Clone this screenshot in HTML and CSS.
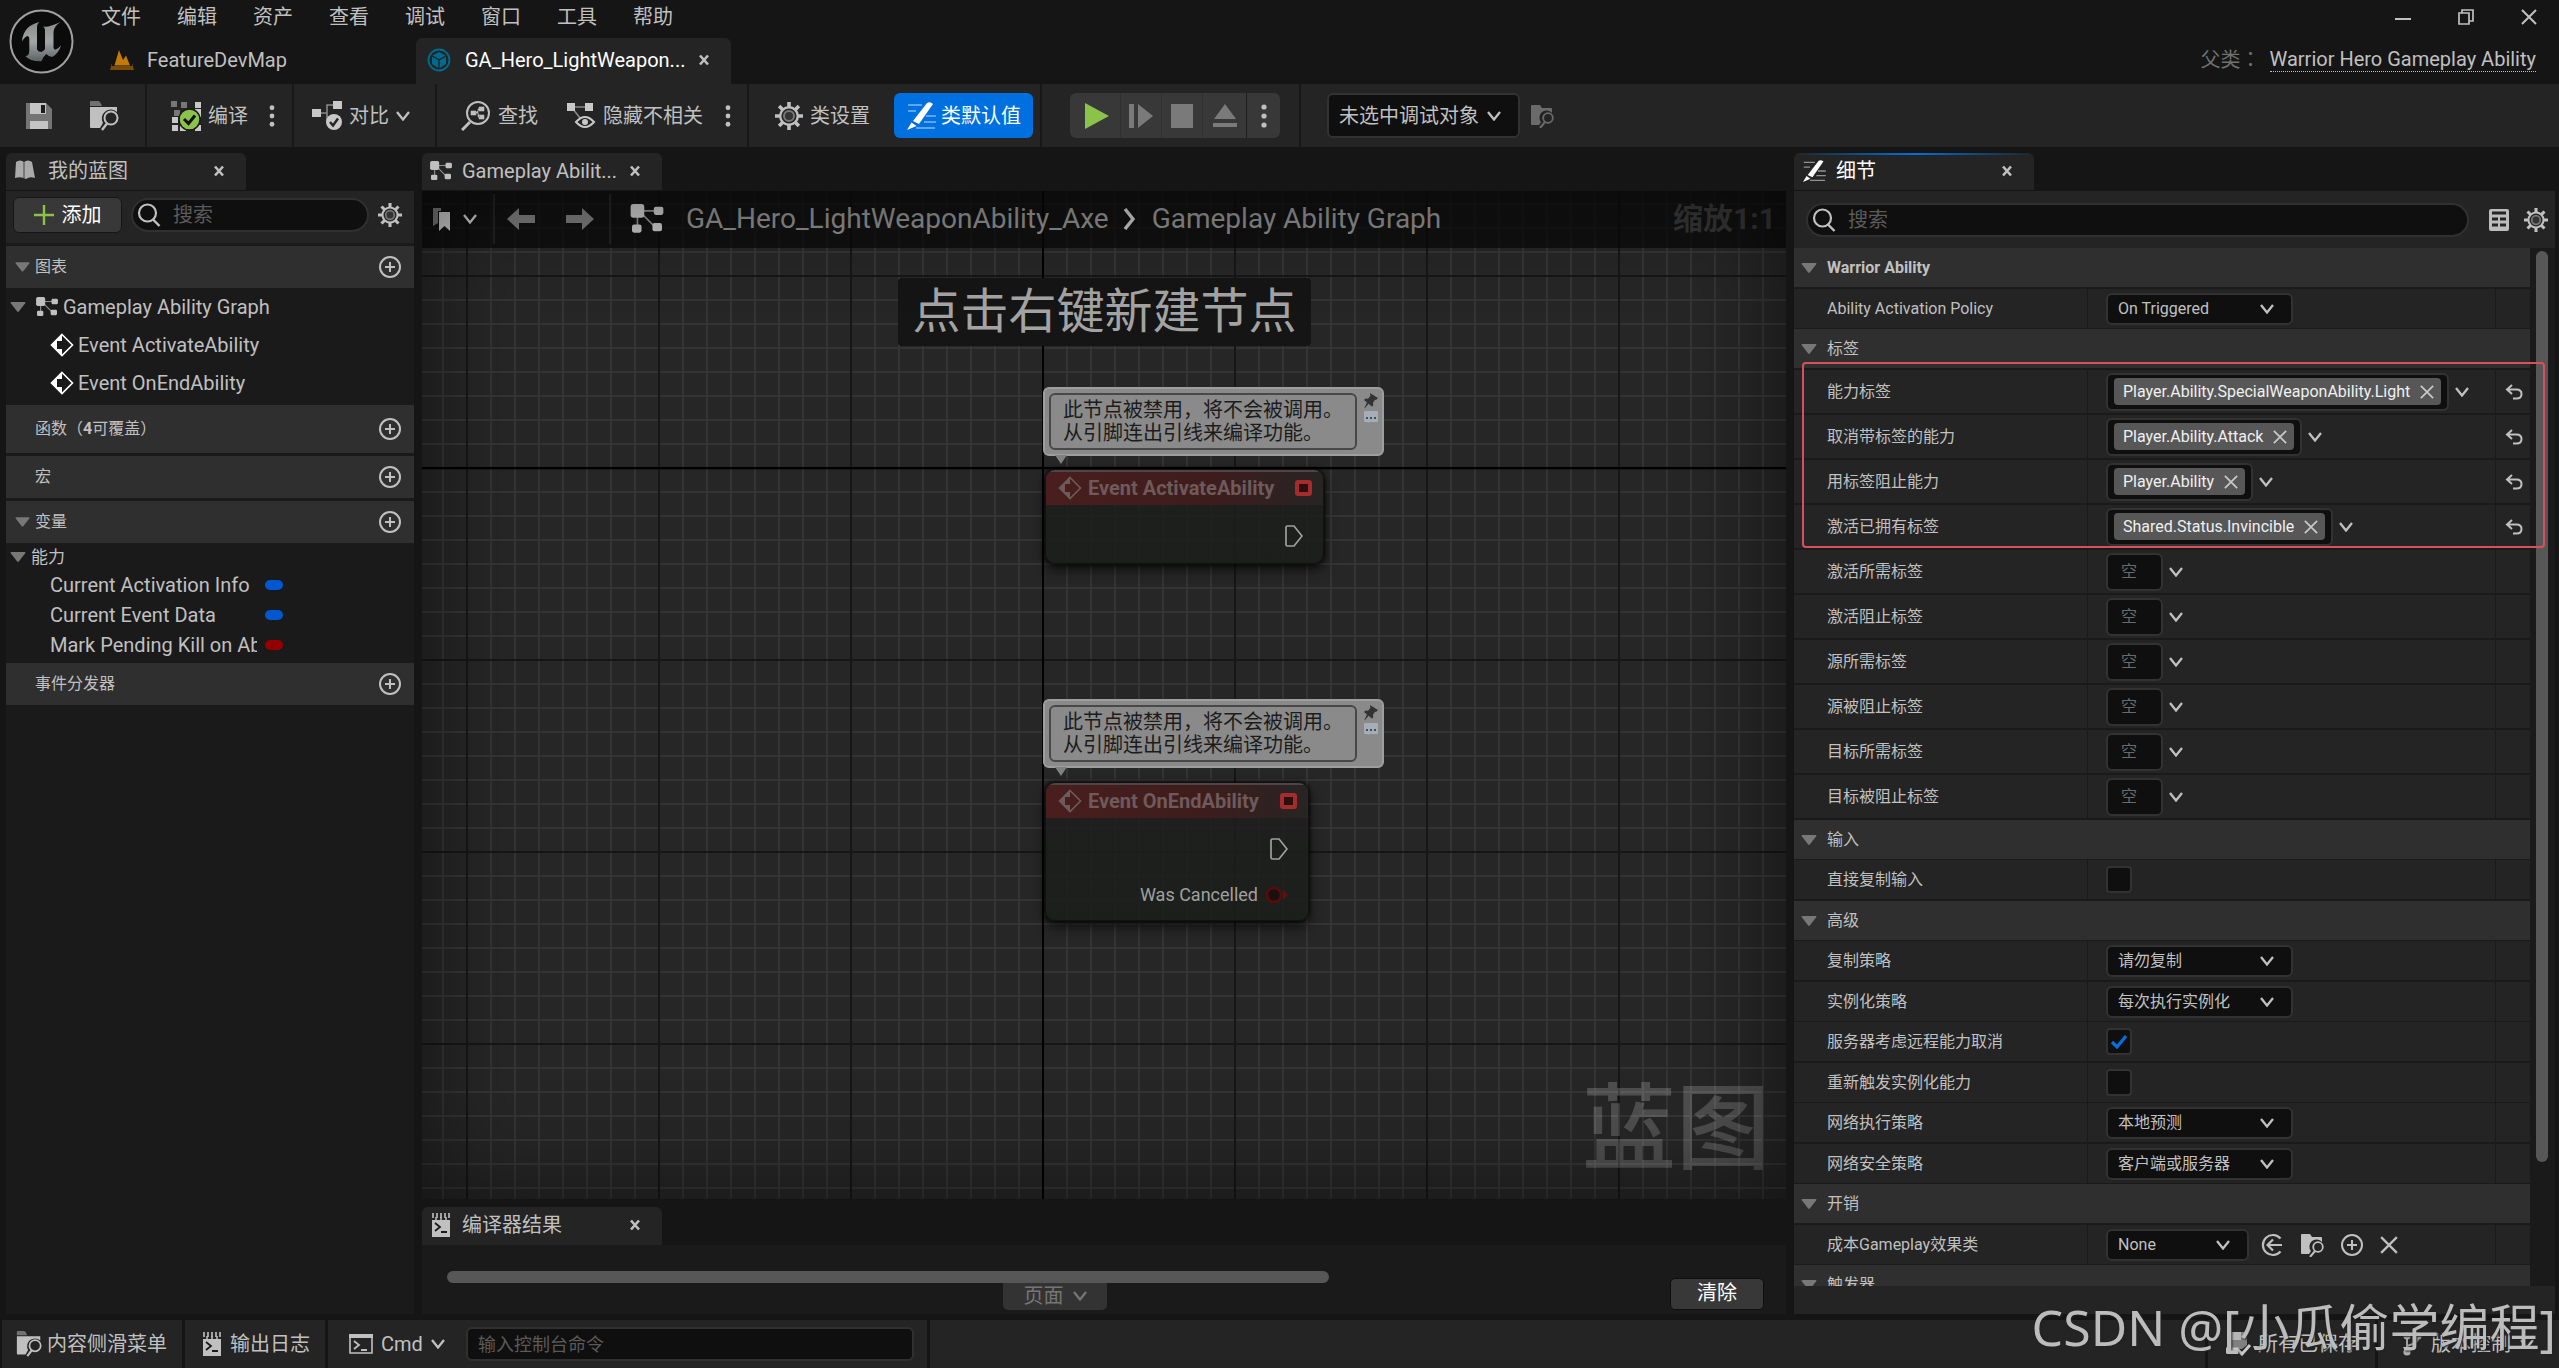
FILE: index.html
```html
<!DOCTYPE html>
<html lang="zh-CN">
<head>
<meta charset="utf-8">
<title>GA_Hero_LightWeaponAbility_Axe</title>
<link rel="stylesheet" href="styles.css">
</head>
<body>
<svg class="sprite" aria-hidden="true">
  <symbol id="chev" viewBox="0 0 14 10"><path d="M1 1 7 8.500 13 1" fill="none" stroke="currentColor" stroke-width="2.300"/></symbol>
  <symbol id="tri" viewBox="0 0 16 10"><path d="M1.500 0h13q1.500 0 .7 1.300L9 9.300q-1 1.200-2 0L.8 1.300Q0 0 1.500 0z" fill="currentColor"/></symbol>
  <symbol id="close" viewBox="0 0 12 12"><path d="M2 1.500 10 10.500M10 1.500 2 10.500" fill="none" stroke="currentColor" stroke-width="2.600"/></symbol>
  <symbol id="cross" viewBox="0 0 16 16"><path d="M1 1 15 15M15 1 1 15" fill="none" stroke="currentColor" stroke-width="2"/></symbol>
  <symbol id="dots" viewBox="0 0 6 24"><g fill="currentColor"><circle cx="3" cy="3" r="2.600"/><circle cx="3" cy="12" r="2.600"/><circle cx="3" cy="21" r="2.600"/></g></symbol>
  <symbol id="plus" viewBox="0 0 24 24"><circle cx="12" cy="12" r="10" fill="none" stroke="currentColor" stroke-width="2"/><path d="M12 7v10M7 12h10" stroke="currentColor" stroke-width="2"/></symbol>
  <symbol id="search" viewBox="0 0 24 24"><circle cx="10.500" cy="10" r="8.500" fill="none" stroke="currentColor" stroke-width="2.200"/><path d="M16 16.500 22.500 23" stroke="currentColor" stroke-width="2.400"/></symbol>
  <symbol id="gear" viewBox="0 0 28 28"><g stroke="currentColor" stroke-width="3.600"><path d="M14 0v28M0 14h28M4.100 4.100l19.800 19.800M23.900 4.100 4.100 23.900"/></g><circle cx="14" cy="14" r="10" fill="currentColor"/><circle cx="14" cy="14" r="7.600" fill="#242424"/><circle cx="14" cy="14" r="5" fill="#333" stroke="#777" stroke-width="2"/></symbol>
  <symbol id="graph" viewBox="0 0 24 22"><path d="M5 5h16M5 5v13M7 6l12 12" stroke="currentColor" stroke-width="1.200" opacity=".7"/><g fill="currentColor"><rect x="0" y="0" width="10" height="10" rx="2"/><rect x="17" y="2" width="7" height="6" rx="1.500"/><rect x="1" y="15" width="7" height="6" rx="1.500"/><rect x="16" y="14" width="7" height="6" rx="1.500"/></g></symbol>
  <symbol id="event" viewBox="0 0 24 24"><path d="M12 1.500 22.500 12 12 22.500 1.500 12z" fill="none" stroke="currentColor" stroke-width="1.600"/><path d="M12 1.500 1.500 12 12 22.500V16H7V8h5z" fill="currentColor"/></symbol>
  <symbol id="browse" viewBox="0 0 30 30"><path d="M1 5V1q0-1 1-1h7q2 0 4 5z" fill="currentColor" opacity=".5"/><path d="M1 6h27v5a9 9 0 0 0-14 11l-3 5H2q-1 0-1-1z" fill="currentColor"/><circle cx="22" cy="17" r="6.500" fill="none" stroke="currentColor" stroke-width="2"/><path d="M18 22.500 13 29" stroke="currentColor" stroke-width="2.400"/></symbol>
  <symbol id="folderfind" viewBox="0 0 24 24"><path d="M1 2q0-1 1-1h8l2 3h9q1 0 1 1v4a7 7 0 0 0-11 9l-2 3H2q-1 0-1-1z" fill="currentColor"/><circle cx="18" cy="14" r="4.800" fill="none" stroke="currentColor" stroke-width="1.800"/><path d="M15 18 10 24" stroke="currentColor" stroke-width="2"/></symbol>
  <symbol id="pencil" viewBox="0 0 30 28"><path d="M2 3h14M2 9h8M20 14h10M18 20h12M10 26h19" stroke="currentColor" stroke-width="1.600" opacity=".5"/><path d="M21 1q3-2 6 1L13 22l-6-3z" fill="currentColor"/><path d="M5.500 20.500 10.500 24 1 28z" fill="currentColor"/></symbol>
  <symbol id="log" viewBox="0 0 18 24"><path d="M0 4h18v20H0z" fill="currentColor"/><path d="M1.500 0v7M6.500 0v7M11.500 0v7M16.500 0v7" stroke="#242424" stroke-width="3.500"/><path d="M1 0v5M5 0v5M9 0v5M13 0v5M17 0v5" stroke="currentColor" stroke-width="1.600"/><path d="M3 10l5 4-5 4M9 19h6" fill="none" stroke="#1a1a1a" stroke-width="1.800"/></symbol>
  <symbol id="reset" viewBox="0 0 18 16"><path d="M7 1 2 5.500 7 10M2 5.500h9.500q5 0 5 4.500t-5 4.500H8" fill="none" stroke="currentColor" stroke-width="2"/></symbol>
  <symbol id="pin" viewBox="0 0 14 15"><path d="M6 0 14 5l-2 2-1-.2-2 3 .3 2.700-1.300 1-3.500-2.700L1 15l-.5-.5L3 9.500 0 7l1.500-1.500 2.500.2L6.300 3z" fill="currentColor"/></symbol>
  <symbol id="bubble" viewBox="0 0 14 12"><path d="M0 1q0-1 1-1h12q1 0 1 1v9q0 1-1 1H6l-2 1-.5-1H1q-1 0-1-1z" fill="#a6adb5"/><path d="M2 7h2M6 7h2M10 7h2" stroke="#3f5062" stroke-width="2"/></symbol>
  <symbol id="exec" viewBox="0 0 18 22"><path d="M1 2.500q0-1.500 1.500-1.500H9l8 10-8 10H2.500Q1 21 1 19.500z" fill="none" stroke="currentColor" stroke-width="1.700"/></symbol>
</svg>

<header class="top">
  <svg class="logo" viewBox="0 0 66 66"><defs><linearGradient id="lg" x1="0" y1="0" x2="0" y2="1"><stop offset="0" stop-color="#8c8c8c"/><stop offset=".5" stop-color="#a2a5a6"/><stop offset="1" stop-color="#5c6265"/></linearGradient></defs><circle cx="33.500" cy="33.500" r="31" fill="#0b0b0b" stroke="#a0a0a0" stroke-width="2"/><path d="M14 33.500Q15 18 31.500 14q-2.500 1.500-2.500 5v22.500q1.500 2.500 4.300 2.500 2.500-1 3.700-3V22q0-2.500-2-3.500 3.500 1 8.500-1 4-1.500 9.200-3.500-6.500 3.500-7.200 10v15.500q.3 2 1.800 2.300 2.500-.5 5.700-4.300-2.500 8-8.700 11.500-4-.5-6-3-3 2.500-5 7.300-11 .5-16-5.300 4 0 4-5.500V30.500q0-2.500-2-2.500-3 1-5.300 5.500z" fill="url(#lg)"/></svg>
  <div class="topcol">
    <div class="menurow">
      <nav class="menus"><a href="#">文件</a><a href="#">编辑</a><a href="#">资产</a><a href="#">查看</a><a href="#">调试</a><a href="#">窗口</a><a href="#">工具</a><a href="#">帮助</a></nav>
      <div class="winctl">
        <button aria-label="最小化"><svg width="16" height="16" viewBox="0 0 16 16"><path d="M0 10h16" stroke="currentColor" stroke-width="2"/></svg></button>
        <button aria-label="还原"><svg width="16" height="16" viewBox="0 0 16 16"><path d="M1 4h10v11H1zM4 4V1h11v11h-4" fill="none" stroke="currentColor" stroke-width="1.700"/></svg></button>
        <button aria-label="关闭"><svg width="16" height="16"><use href="#cross"/></svg></button>
      </div>
    </div>
    <div class="tabrow">
      <div class="maptab"><svg width="24" height="20" viewBox="0 0 24 20"><path d="M4.500 15.500 9 0l4 10 3-4.500 4 10z" fill="#c47a0a"/><path d="M2 13v3h20v-3l2 7H0z" fill="#7a4b07"/></svg><span>FeatureDevMap</span></div>
      <div class="assettab"><svg width="24" height="24" viewBox="0 0 24 24"><circle cx="12" cy="12" r="10.500" fill="none" stroke="#006b91" stroke-width="1.800"/><path d="M12 4l6.500 3.500L12 11 5.500 7.500zM5 8.800l6.300 3.400V20L5 16zM19 8.800l-6.300 3.400V20L19 16z" fill="#006b91"/></svg><span>GA_Hero_LightWeapon...</span><button aria-label="关闭标签"><svg width="12" height="12"><use href="#close"/></svg></button></div>
      <div class="parent"><span>父类<em lang="zh-TW">：</em></span><a href="#">Warrior Hero Gameplay Ability</a></div>
    </div>
  </div>
</header>

<div class="toolbar">
  <div class="grp g1">
    <button aria-label="保存"><svg width="28" height="28" viewBox="0 0 28 28"><path d="M1 1h20l6 6v20H1z" fill="#747474"/><path d="M5 1h16v11H5zM5 19h18v8H5z" fill="#c4c4c4"/><path d="M16 3h4v8h-4z" fill="#1c1c1c"/></svg></button>
    <button aria-label="浏览"><svg width="30" height="30"><use href="#browse"/></svg></button>
  </div>
  <div class="grp g2">
    <button><svg width="30" height="30" viewBox="0 0 30 30"><path d="M0 0h6v6H0zM10 1h6v6h-6zM3 9h6v6H3z" fill="#777"/><path d="M24 1h6v6h-6zM24 8h6v8h-6zM1 16h6v6H1zM1 24h6v6H1zM9 24h6v6H9zM24 24h6v6h-6z" fill="#c8c8c8"/><circle cx="18.500" cy="18.500" r="10.500" fill="#8bc24a" stroke="#1a1a1a" stroke-width="1.500"/><path d="M13 18l4.500 4.500 6.500-8" fill="none" stroke="#111" stroke-width="3"/></svg>编译</button>
    <button aria-label="更多"><svg width="6" height="22"><use href="#dots"/></svg></button>
  </div>
  <div class="grp g3">
    <button><svg width="30" height="30" viewBox="0 0 30 30"><path d="M8 12h7V4h6M15 12v8" fill="none" stroke="#888" stroke-width="1.600"/><path d="M0 8h9v8H0zM21 0h9v8h-9z" fill="#c8c8c8"/><circle cx="22" cy="21" r="8" fill="#c8c8c8"/><path d="M18 21l3 3.500 5-7" fill="none" stroke="#242424" stroke-width="2.400"/></svg>对比<svg width="14" height="10"><use href="#chev"/></svg></button>
  </div>
  <div class="grp g4">
    <button><svg width="30" height="30" viewBox="0 0 30 30"><circle cx="17" cy="12" r="11" fill="none" stroke="currentColor" stroke-width="2"/><path d="M9 21 1 29" stroke="currentColor" stroke-width="3"/><path d="M10 10h5v4h-5zM18 6h5v4h-5zM18 14h5v4h-5zM14 12h3V8h2M17 12v4h2" fill="currentColor" stroke="currentColor" stroke-width=".6"/></svg>查找</button>
    <button><svg width="30" height="30" viewBox="0 0 30 30"><path d="M5 6h18M7 8l7 9" stroke="#888" stroke-width="1.600"/><path d="M1 2h8v8H1zM19 2h8v8h-8z" fill="#c8c8c8"/><path d="M10 21q9-10 18 0-9 10-18 0z" fill="none" stroke="#c8c8c8" stroke-width="2"/><circle cx="19" cy="21" r="3" fill="#c8c8c8"/></svg>隐藏不相关</button>
    <button aria-label="更多"><svg width="6" height="22"><use href="#dots"/></svg></button>
  </div>
  <div class="grp g5">
    <button><svg width="28" height="28"><use href="#gear"/></svg>类设置</button>
    <button class="blue"><svg width="30" height="28"><use href="#pencil"/></svg>类默认值</button>
  </div>
  <div class="grp g6">
    <div class="play">
      <button aria-label="播放"><svg width="24" height="26" viewBox="0 0 24 26"><path d="M0 0 24 13 0 26z" fill="#8bc24a"/></svg></button>
      <button aria-label="步进"><svg width="24" height="26" viewBox="0 0 24 26"><path d="M0 1h5v24H0zM9 1l15 12L9 25z" fill="#7a7a7a"/></svg></button>
      <button aria-label="停止"><svg width="24" height="26" viewBox="0 0 24 26"><path d="M1 1h22v24H1z" fill="#7a7a7a"/></svg></button>
      <button aria-label="弹出"><svg width="24" height="26" viewBox="0 0 24 26"><path d="M12 1 23 16H1zM0 20h24v4H0z" fill="#7a7a7a"/></svg></button>
      <button aria-label="更多"><svg width="6" height="26"><use href="#dots"/></svg></button>
    </div>
  </div>
  <div class="grp g7">
    <div class="sel dbg"><select aria-label="调试对象"><option>未选中调试对象</option></select><svg width="14" height="10"><use href="#chev"/></svg></div>
    <button class="dim" aria-label="浏览对象"><svg width="24" height="24"><use href="#folderfind"/></svg></button>
  </div>
</div>

<main>
  <section class="left">
    <div class="tab"><svg width="22" height="22" viewBox="0 0 22 22"><path d="M2 2q4-3 8 0 4-3 8 0l3 16q-5-2-9 1-5-3-11-1z" fill="#aaa"/><path d="M10 2v16" stroke="#666" stroke-width="1.500"/></svg><span>我的蓝图</span><button aria-label="关闭"><svg width="12" height="12"><use href="#close"/></svg></button></div>
    <div class="lefttools">
      <button class="add"><svg width="20" height="20" viewBox="0 0 20 20"><path d="M10 0v20M0 10h20" stroke="#8bc24a" stroke-width="2.400"/></svg>添加</button>
      <label class="search"><svg width="24" height="24"><use href="#search"/></svg><input type="text" placeholder="搜索" aria-label="搜索蓝图"></label>
      <button aria-label="设置"><svg width="24" height="24"><use href="#gear"/></svg></button>
    </div>
    <div class="tree">
      <div class="sec"><svg class="tri" width="16" height="10"><use href="#tri"/></svg><span>图表</span><button aria-label="添加图表"><svg width="24" height="24"><use href="#plus"/></svg></button></div>
      <div class="graphs">
        <div class="g"><svg class="tri" width="16" height="10"><use href="#tri"/></svg><svg class="gi" width="22" height="20"><use href="#graph"/></svg>Gameplay Ability Graph</div>
        <div class="e"><svg width="24" height="24"><use href="#event"/></svg>Event ActivateAbility</div>
        <div class="e"><svg width="24" height="24"><use href="#event"/></svg>Event OnEndAbility</div>
      </div>
      <div class="sec tall gapb"><span>函数（<b>4</b>可覆盖）</span><button aria-label="添加函数"><svg width="24" height="24"><use href="#plus"/></svg></button></div>
      <div class="sec gapb"><span>宏</span><button aria-label="添加宏"><svg width="24" height="24"><use href="#plus"/></svg></button></div>
      <div class="sec"><svg class="tri" width="16" height="10"><use href="#tri"/></svg><span>变量</span><button aria-label="添加变量"><svg width="24" height="24"><use href="#plus"/></svg></button></div>
      <div class="vars">
        <div class="cat"><svg class="tri" width="16" height="10"><use href="#tri"/></svg>能力</div>
        <div class="v"><span>Current Activation Info</span><i class="pill"></i></div>
        <div class="v"><span>Current Event Data</span><i class="pill"></i></div>
        <div class="v"><span>Mark Pending Kill on Ability Failure</span><i class="pill red"></i></div>
      </div>
      <div class="sec"><span>事件分发器</span><button aria-label="添加事件分发器"><svg width="24" height="24"><use href="#plus"/></svg></button></div>
    </div>
  </section>

  <section class="mid">
    <div class="tab gtab"><svg width="22" height="20"><use href="#graph"/></svg><span>Gameplay Abilit...</span><button aria-label="关闭"><svg width="12" height="12"><use href="#close"/></svg></button></div>
    <div class="canvas">
      <div class="crumbs">
        <button class="bm" aria-label="书签"><svg width="18" height="24" viewBox="0 0 18 24"><path d="M0 1h8v3H5v12l-5 3z" fill="#777"/><path d="M6 5h11v19l-5.500-5L6 24z" fill="#c8c8c8"/></svg><svg width="14" height="10"><use href="#chev"/></svg></button>
        <div class="nav"><button aria-label="后退"><svg width="28" height="22" viewBox="0 0 28 22"><path d="M0 11 12 0v7h16v8H12v7z" fill="#777"/></svg></button><button aria-label="前进"><svg width="28" height="22" viewBox="0 0 28 22"><path d="M28 11 16 0v7H0v8h16v7z" fill="#777"/></svg></button></div>
        <svg class="gi" width="34" height="30"><use href="#graph"/></svg>
        <a href="#">GA_Hero_LightWeaponAbility_Axe</a>
        <svg class="sepc" width="14" height="22" viewBox="0 0 14 22"><path d="M2 1l8 10-8 10" fill="none" stroke="#c0c0c0" stroke-width="3.400"/></svg>
        <span>Gameplay Ability Graph</span>
        <b>缩放1:1</b>
      </div>
      <div class="hint">点击右键新建节点</div>
      <div class="note n1"><p>此节点被禁用，将不会被调用。<br>从引脚连出引线来编译功能。</p><div><svg class="pin" width="14" height="15"><use href="#pin"/></svg><svg width="14" height="12"><use href="#bubble"/></svg></div></div>
      <div class="node k1">
        <h3><svg width="24" height="24"><use href="#event"/></svg>Event ActivateAbility<i></i></h3>
        <div class="out"><svg width="18" height="22"><use href="#exec"/></svg></div>
      </div>
      <div class="note n2"><p>此节点被禁用，将不会被调用。<br>从引脚连出引线来编译功能。</p><div><svg class="pin" width="14" height="15"><use href="#pin"/></svg><svg width="14" height="12"><use href="#bubble"/></svg></div></div>
      <div class="node k2">
        <h3><svg width="24" height="24"><use href="#event"/></svg>Event OnEndAbility<i></i></h3>
        <div class="out"><svg width="18" height="22"><use href="#exec"/></svg></div>
        <div class="out was">Was Cancelled<svg width="24" height="18" viewBox="0 0 24 18"><circle cx="9" cy="9" r="7" fill="#1a1010" stroke="#5a0c0c" stroke-width="2.600"/><path d="M18 4l5 5-5 5z" fill="#6a0c0c"/></svg></div>
      </div>
      <div class="bpmark">蓝图</div>
    </div>
    <div class="tab ctab"><svg width="18" height="24"><use href="#log"/></svg><span>编译器结果</span><button aria-label="关闭"><svg width="12" height="12"><use href="#close"/></svg></button></div>
    <div class="results">
      <div class="hbar"></div>
      <div class="resrow"><button class="page">页面<svg width="14" height="10"><use href="#chev"/></svg></button><button class="clear">清除</button></div>
    </div>
  </section>

  <section class="right">
    <div class="tab dtab"><svg width="24" height="22"><use href="#pencil"/></svg><span>细节</span><button aria-label="关闭"><svg width="12" height="12"><use href="#close"/></svg></button></div>
    <div class="dtools">
      <label class="search"><svg width="24" height="24"><use href="#search"/></svg><input type="text" placeholder="搜索" aria-label="搜索细节"></label>
      <button aria-label="属性矩阵"><svg width="20" height="22" viewBox="0 0 20 22"><rect width="20" height="22" rx="2" fill="#bdbdbd"/><path d="M3 4h14M3 10h6M11 10h6M3 16h6M11 16h6" stroke="#242424" stroke-width="3"/></svg></button>
      <button aria-label="设置"><svg width="24" height="24"><use href="#gear"/></svg></button>
    </div>
    <div class="dbody">
      <div class="list">
        <div class="hd thick"><svg class="tri" width="16" height="10"><use href="#tri"/></svg><b>Warrior Ability</b></div>
        <div class="row"><label for="p0">Ability Activation Policy</label><div class="val"><div class="sel"><select id="p0"><option>On Triggered</option></select><svg width="14" height="10"><use href="#chev"/></svg></div></div><div></div></div>
        <div class="hd thick"><svg class="tri" width="16" height="10"><use href="#tri"/></svg>标签</div>
        <div class="row tag"><span>能力标签</span><div class="val"><div class="box"><span>Player.Ability.SpecialWeaponAbility.Light<button aria-label="移除"><svg width="14" height="14"><use href="#cross"/></svg></button></span></div><svg width="14" height="10"><use href="#chev"/></svg></div><div><svg width="18" height="16"><use href="#reset"/></svg></div></div>
        <div class="row tag"><span>取消带标签的能力</span><div class="val"><div class="box"><span>Player.Ability.Attack<button aria-label="移除"><svg width="14" height="14"><use href="#cross"/></svg></button></span></div><svg width="14" height="10"><use href="#chev"/></svg></div><div><svg width="18" height="16"><use href="#reset"/></svg></div></div>
        <div class="row tag"><span>用标签阻止能力</span><div class="val"><div class="box"><span>Player.Ability<button aria-label="移除"><svg width="14" height="14"><use href="#cross"/></svg></button></span></div><svg width="14" height="10"><use href="#chev"/></svg></div><div><svg width="18" height="16"><use href="#reset"/></svg></div></div>
        <div class="row tag"><span>激活已拥有标签</span><div class="val"><div class="box"><span>Shared.Status.Invincible<button aria-label="移除"><svg width="14" height="14"><use href="#cross"/></svg></button></span></div><svg width="14" height="10"><use href="#chev"/></svg></div><div><svg width="18" height="16"><use href="#reset"/></svg></div></div>
        <div class="row tag"><span>激活所需标签</span><div class="val"><div class="box empty">空</div><svg width="14" height="10"><use href="#chev"/></svg></div><div></div></div>
        <div class="row tag"><span>激活阻止标签</span><div class="val"><div class="box empty">空</div><svg width="14" height="10"><use href="#chev"/></svg></div><div></div></div>
        <div class="row tag"><span>源所需标签</span><div class="val"><div class="box empty">空</div><svg width="14" height="10"><use href="#chev"/></svg></div><div></div></div>
        <div class="row tag"><span>源被阻止标签</span><div class="val"><div class="box empty">空</div><svg width="14" height="10"><use href="#chev"/></svg></div><div></div></div>
        <div class="row tag"><span>目标所需标签</span><div class="val"><div class="box empty">空</div><svg width="14" height="10"><use href="#chev"/></svg></div><div></div></div>
        <div class="row tag"><span>目标被阻止标签</span><div class="val"><div class="box empty">空</div><svg width="14" height="10"><use href="#chev"/></svg></div><div></div></div>
        <div class="hd"><svg class="tri" width="16" height="10"><use href="#tri"/></svg>输入</div>
        <div class="row thick"><label for="c0">直接复制输入</label><div class="val"><input type="checkbox" id="c0"></div><div></div></div>
        <div class="hd"><svg class="tri" width="16" height="10"><use href="#tri"/></svg>高级</div>
        <div class="row thick"><label for="p1">复制策略</label><div class="val"><div class="sel"><select id="p1"><option>请勿复制</option></select><svg width="14" height="10"><use href="#chev"/></svg></div></div><div></div></div>
        <div class="row"><label for="p2">实例化策略</label><div class="val"><div class="sel"><select id="p2"><option>每次执行实例化</option></select><svg width="14" height="10"><use href="#chev"/></svg></div></div><div></div></div>
        <div class="row thick"><label for="c1">服务器考虑远程能力取消</label><div class="val"><span class="ck"><input type="checkbox" id="c1" checked><svg width="18" height="14" viewBox="0 0 18 14"><path d="M2 7l5 5 9-11" fill="none" stroke="#0070e0" stroke-width="3.200"/></svg></span></div><div></div></div>
        <div class="row"><label for="c2">重新触发实例化能力</label><div class="val"><input type="checkbox" id="c2"></div><div></div></div>
        <div class="row thick"><label for="p3">网络执行策略</label><div class="val"><div class="sel"><select id="p3"><option>本地预测</option></select><svg width="14" height="10"><use href="#chev"/></svg></div></div><div></div></div>
        <div class="row"><label for="p4">网络安全策略</label><div class="val"><div class="sel"><select id="p4"><option>客户端或服务器</option></select><svg width="14" height="10"><use href="#chev"/></svg></div></div><div></div></div>
        <div class="hd thick"><svg class="tri" width="16" height="10"><use href="#tri"/></svg>开销</div>
        <div class="row"><label for="p5">成本Gameplay效果类</label><div class="val cost"><div class="sel none"><select id="p5"><option>None</option></select><svg width="14" height="10"><use href="#chev"/></svg></div>
          <button aria-label="使用选中项"><svg width="24" height="24" viewBox="0 0 24 24"><path d="M20.500 5.500a10 10 0 1 0 0 13M22 12H8M13 6.500 7.500 12l5.500 5.500" fill="none" stroke="currentColor" stroke-width="2.200"/></svg></button>
          <button aria-label="浏览"><svg width="24" height="24"><use href="#folderfind"/></svg></button>
          <button aria-label="新建"><svg width="24" height="24"><use href="#plus"/></svg></button>
          <button aria-label="清空"><svg width="18" height="18"><use href="#cross"/></svg></button></div><div></div></div>
        <div class="hd"><svg class="tri" width="16" height="10"><use href="#tri"/></svg>触发器</div>
      </div>
      <div class="vbar"><i></i></div>
      <div class="mark"></div>
    </div>
    <div class="dfoot"></div>
  </section>
</main>

<footer>
  <button class="f1"><svg width="26" height="28"><use href="#browse"/></svg>内容侧滑菜单</button>
  <button class="f2"><svg width="18" height="24"><use href="#log"/></svg>输出日志</button>
  <div class="f3"><button><svg width="24" height="20" viewBox="0 0 24 20"><path d="M1 1h22v18H1z" fill="none" stroke="currentColor" stroke-width="1.600"/><path d="M0 0h24v4H0z" fill="currentColor"/><path d="M5 7l5 4-5 4M12 16h6" fill="none" stroke="currentColor" stroke-width="1.800"/></svg>Cmd<svg width="14" height="10"><use href="#chev"/></svg></button><input type="text" placeholder="输入控制台命令" aria-label="控制台命令"></div>
  <div class="f4"></div>
  <button class="f5"><svg width="26" height="24" viewBox="0 0 26 24"><path d="M1 0h17l3 3v10l-5 4H1z" fill="#808080"/><path d="M5 0h10v8H5z" fill="#b5b5b5"/><path d="M1 17h10v3H1zM12 18l4 4 8-9" fill="none" stroke="#c8c8c8" stroke-width="3"/></svg>所有已保存</button>
  <button class="f6"><svg width="20" height="24" viewBox="0 0 20 24"><path d="M5 4v17M16 4v3q0 4-11 7" fill="none" stroke="#a0a0a0" stroke-width="2"/><g fill="#b0b0b0"><circle cx="5" cy="4" r="3.600"/><circle cx="16" cy="4" r="3.600"/><circle cx="5" cy="20" r="3.600"/></g></svg>版本控制<svg width="14" height="10"><use href="#chev"/></svg></button>
</footer>
<div class="credit">CSDN @[小瓜偷学编程]</div>
</body>
</html>
```
FILE: styles.css
```css
* { box-sizing: border-box; }
html, body { margin: 0; height: 100%; }
body {
  display: flex; flex-direction: column; height: 100vh; overflow: hidden; position: relative;
  background: #151515; color: #c0c0c0;
  font: 20px/24px Roboto, "Noto Sans CJK SC", sans-serif;
}
.sprite { position: absolute; width: 0; height: 0; }
svg { display: block; flex: none; }
em { font-style: normal; font-family: "Noto Sans CJK TC", sans-serif; line-height: 1; }
button, input, select { font: inherit; color: inherit; border: 0; background: none; padding: 0; margin: 0; }
button { display: flex; align-items: center; white-space: nowrap; flex: none; }
a { color: inherit; text-decoration: none; }
input::placeholder { color: #5a5a5a; opacity: 1; }

/* title area */
.top { display: flex; flex: none; height: 84px; }
.logo { width: 66px; height: 66px; margin: 8px 0 0 8px; }
.topcol { flex: 1; display: flex; flex-direction: column; }
.menurow { height: 34px; display: flex; justify-content: space-between; align-items: center; padding: 0 22px 0 27px; }
.menus { display: flex; gap: 36px; }
.winctl { display: flex; gap: 47px; }
.tabrow { display: flex; margin-top: 4px; height: 46px; align-items: center; }
.maptab { width: 342px; display: flex; align-items: center; gap: 13px; padding-left: 36px; }
.assettab { width: 315px; height: 46px; display: flex; align-items: center; padding: 0 21px 0 11px; background: #242424; border-radius: 6px 6px 0 0; color: #fff; }
.assettab span { margin-left: 14px; flex: 1; }
.assettab button, .tab button { color: #c0c0c0; }
.tabrow > div { padding-bottom: 2px; }
.parent { margin-left: auto; padding-right: 23px; display: flex; }
.parent span { color: #707070; width: 69px; }
.parent a { border-bottom: 1px dotted #c0c0c0; line-height: 22px; }

/* toolbar */
.toolbar { flex: none; height: 63px; background: #242424; display: flex; }
.grp { display: flex; align-items: center; border-right: 2px solid #181818; }
.g1 { width: 147px; padding-left: 25px; gap: 36px; }
.g2 { width: 147px; padding-left: 24px; gap: 21px; }
.g3 { width: 143px; padding-left: 18px; }
.g4 { width: 312px; padding-left: 24px; gap: 28px; }
.g4 button:last-child { margin-left: -6px; }
.g5 { width: 293px; padding-left: 26px; gap: 24px; }
.g6 { width: 259px; padding-left: 28px; }
.g7 { flex: 1; border: 0; padding-left: 26px; gap: 10px; }
.grp button { gap: 7px; }
.grp .blue { background: #0070e0; color: #fff; height: 45px; border-radius: 6px; padding: 0 12px; gap: 5px; }
.play { display: flex; height: 45px; background: #383838; border-radius: 6px; }
.play button { width: 41px; justify-content: center; border-right: 1px solid #303030; }
.play button:nth-child(4) { width: 44px; border-color: #1e1e1e; }
.play button:first-child { width: 51px; padding-left: 3px; }
.play button:last-child { width: 33px; border: 0; }
.dim { color: #6a6a6a; }

.sel { position: relative; width: 187px; height: 32px; }
.sel select { width: 100%; height: 100%; appearance: none; background: #0f0f0f; border: 2px solid #323232; border-radius: 6px; padding: 0 10px; }
.sel svg { position: absolute; right: 19px; top: 50%; margin-top: -5px; pointer-events: none; }
.sel.dbg { width: 193px; height: 45px; }

/* panels */
main { flex: 1; min-height: 0; display: flex; gap: 8px; padding: 6px 4px 6px 6px; }
section { display: flex; flex-direction: column; min-height: 0; }
.tab { flex: none; width: 240px; height: 37px; margin-bottom: 1px; padding: 0 21px 2px 8px; display: flex; align-items: center; background: #242424; border-radius: 6px 6px 0 0; }
.tab span { flex: 1; margin-left: 12px; }
.tab.gtab span { margin-left: 10px; }

.left { width: 408px; flex: none; }
.lefttools { height: 52px; flex: none; background: #242424; display: flex; align-items: center; gap: 9px; padding: 0 12px 4px 7px; }
.add { width: 109px; height: 36px; justify-content: center; gap: 8px; background: #383838; border: 1px solid #161616; border-radius: 6px; color: #fff; }
.search { flex: 1; min-width: 0; height: 34px; display: flex; align-items: center; gap: 12px; padding: 0 4px; background: #0f0f0f; border: 2px solid #303030; border-radius: 17px; }
.search input { flex: 1; min-width: 0; }
.tree { flex: 1; background: #1a1a1a; border-top: 3px solid #1a1a1a; }
.sec { height: 42px; background: #2f2f2f; display: flex; align-items: center; padding: 0 12px 0 29px; font-size: 16px; }
.sec span { flex: 1; }
.sec .tri { margin: 0 5px 0 -20px; width: 15px; }
.tri { color: #787878; }
.tall { height: 48px; }
.gapb { margin-bottom: 3px; }
.graphs { height: 117px; }
.graphs div { display: flex; align-items: center; height: 38px; }
.graphs .g { padding-left: 4px; }
.g .gi { margin: 0 5px 0 10px; }
.graphs .e { padding-left: 44px; gap: 4px; }
.e svg { color: #fff; }
.vars { height: 120px; }
.cat { height: 27px; display: flex; align-items: center; gap: 5px; padding-left: 4px; font-size: 17px; }
.v { height: 30px; display: flex; align-items: center; padding-left: 44px; }
.v span { width: 207px; margin-right: 8px; overflow: hidden; white-space: nowrap; }
.pill { width: 18px; height: 10px; border-radius: 5px; background: #0058d0; }
.pill.red { background: #940000; }

/* graph */
.mid { flex: 1; min-width: 0; }
.canvas {
  flex: 1; position: relative; overflow: hidden; background-color: #262626;
  background-image:
    linear-gradient(90deg, #000 2px, transparent 2px), linear-gradient(#000 2px, transparent 2px),
    linear-gradient(90deg, #161616 2px, transparent 2px), linear-gradient(#161616 2px, transparent 2px),
    linear-gradient(90deg, #343434 2px, transparent 2px), linear-gradient(#343434 2px, transparent 2px);
  background-size: 4000px 100%, 100% 4000px, 192px 100%, 100% 192px, 24px 100%, 100% 24px;
  background-position: 620px 0, 0 276px, 620px 0, 0 276px, 620px 0, 0 276px;
}
.canvas::after { content: ""; position: absolute; inset: 0; box-shadow: inset 0 0 100px rgba(0,0,0,.5); pointer-events: none; }
.crumbs { height: 57px; display: flex; align-items: center; padding: 0 10px 2px 11px; background: rgba(8,8,8,.72); font-size: 28px; line-height: 32px; color: #8a8a8a; }
.bm { gap: 12px; width: 60px; color: #c8c8c8; }
.nav { display: flex; gap: 31px; width: 118px; padding-left: 12px; border: solid #222; border-width: 0 2px; height: 50px; }
.crumbs .gi { margin: 0 22px 0 19px; color: #c0c0c0; }
.sepc { margin: 0 15px 0 14px; }
.crumbs b { margin-left: auto; font-size: 30px; color: #353535; }
.hint { position: absolute; left: 476px; top: 87px; width: 413px; height: 68px; background: #151515; border-radius: 4px; font-size: 48px; line-height: 68px; color: #a3a3a3; text-align: center; white-space: nowrap; }
.note { position: absolute; left: 621px; width: 341px; height: 69px; background: #8a8a8a; border: 2px solid #9e9e9e; border-radius: 6px; display: flex; padding: 4px; gap: 7px; color: #1c1c1c; }
.note::after { content: ""; position: absolute; left: 10px; top: 66px; border: 6px solid transparent; border-top: 9px solid #808080; border-bottom: 0; }
.note p { margin: 0; width: 308px; height: 57px; border: 2px solid #484848; border-radius: 6px; padding: 4px 12px; line-height: 23px; white-space: nowrap; }
.note .pin { margin-bottom: 3px; color: #333; }
.n1 { top: 196px; }
.n2 { top: 508px; }
.node { position: absolute; left: 623px; background: linear-gradient(rgba(30,30,30,.88), rgba(26,30,26,.9)); border: 1px solid #111; border-radius: 10px; overflow: hidden; box-shadow: 0 6px 12px rgba(0,0,0,.6), 0 0 4px #000; color: #999; }
.node h3 { margin: 0; height: 35px; border-top: 2px solid #504444; display: flex; align-items: center; gap: 6px; padding: 0 11px 2px 12px; font-size: 20px; color: #6e5a5a; background: linear-gradient(90deg, rgba(75,30,30,.95), rgba(65,28,28,.9) 60%, rgba(45,40,40,.6)); }
.node h3 i { margin-left: auto; width: 17px; height: 16px; border: 4px solid #a52c2c; border-radius: 3px; background: #2c1010; }
.out { display: flex; justify-content: flex-end; align-items: center; gap: 7px; padding: 20px 20px 0 0; height: 42px; color: #a0a0a0; }
.was { height: 48px; padding: 22px 19px 0 0; font-size: 18px; }
.k1 { top: 278px; width: 279px; height: 95px; }
.k2 { top: 591px; width: 264px; height: 139px; }
.bpmark { position: absolute; right: 16px; bottom: 14px; font-size: 94px; line-height: 110px; font-weight: 500; color: rgba(255,255,255,.19); }

.ctab { margin: 8px 0 0; height: 38px; }
.ctab svg { margin-left: 2px; }
.results { flex: none; height: 69px; background: #1a1a1a; padding: 26px 22px 0 25px; }
.hbar { width: 67%; height: 12px; border-radius: 6px; background: #575757; }
.resrow { display: flex; justify-content: space-between; align-items: flex-end; padding-left: 556px; height: 27px; }
.resrow button { padding-bottom: 2px; }
.page { width: 104px; height: 27px; justify-content: center; gap: 9px; background: #333; color: #757575; border-radius: 0 0 5px 5px; }
.clear { width: 94px; height: 32px; justify-content: center; background: #383838; color: #fff; border: 1px solid #0f0f0f; border-radius: 5px; }

/* details */
.right { width: 761px; flex: none; }
.dtab { color: #fff; background: linear-gradient(90deg, #242424, #0070e0, #242424) top / 100% 2px no-repeat #242424; }
.tab.dtab span { margin-left: 10px; }
.dtools { height: 57px; flex: none; background: #242424; display: flex; align-items: center; gap: 15px; padding: 0 7px 0 12px; }
.dtools .search { margin-right: 5px; }
.dbody { flex: 1; min-height: 0; display: flex; position: relative; overflow: hidden; background: #1a1a1a; font-size: 16px; line-height: 20px; }
.list { flex: 1; }
.hd, .row { height: 40px; border-bottom: 1px solid #1a1a1a; display: flex; align-items: center; }
.thick { height: 41px; border-bottom-width: 2px; }
.hd { background: #2f2f2f; padding-left: 7px; gap: 10px; }
.row { background: #242424; display: grid; grid-template-columns: 293px 1fr 35px; align-items: stretch; }
.row.tag { height: 45px; border-bottom-width: 2px; }
.row > * { display: flex; align-items: center; border-left: 1px solid #1a1a1a; }
.row > :first-child { padding-left: 33px; border: 0; }
.row > :last-child { padding-left: 9px; }
.val { padding-left: 18px; gap: 6px; }
.val.cost { gap: 16px; }
.sel.none { width: 143px; margin-right: -5px; }
.box { height: 38px; padding: 0 6px; display: flex; align-items: center; background: #0f0f0f; border: 2px solid #323232; border-radius: 6px; }
.box span { height: 27px; display: flex; align-items: center; gap: 10px; padding: 0 7px 0 9px; background: #575757; border-radius: 4px; color: #f0f0f0; }
.box span button { color: #c8c8c8; }
.box.empty { width: 57px; padding-left: 13px; color: #6a6a6a; }
input[type=checkbox] { appearance: none; width: 26px; height: 27px; background: #0f0f0f; border: 2px solid #323232; border-radius: 4px; }
.ck { display: grid; place-items: center; }
.ck > * { grid-area: 1 / 1; }
.ck svg { pointer-events: none; }
.vbar { width: 25px; padding: 3px 7px 0 6px; }
.vbar i { display: block; height: 88%; border-radius: 6px; background: #575757; }
.mark { position: absolute; left: 8px; top: 114px; width: 743px; height: 186px; border: 2px solid #d9505d; border-radius: 4px; }
.dfoot { flex: none; height: 28px; background: #242424; }

/* status bar */
footer { flex: none; height: 48px; display: flex; gap: 3px; padding-left: 2px; }
footer > * { background: #242424; }
.f1 { width: 180px; padding-left: 14px; gap: 5px; }
.f2 { width: 140px; padding-left: 18px; gap: 9px; }
.f3 { width: 599px; display: flex; align-items: center; padding-left: 21px; }
.f3 button { gap: 8px; width: 117px; }
.f3 input { width: 448px; height: 34px; background: #0f0f0f; border: 2px solid #303030; border-radius: 6px; padding: 0 10px; font-size: 18px; }
.f4 { flex: 1; }
.f5 { width: 167px; padding-left: 18px; gap: 6px; }
.f6 { width: 181px; padding-left: 24px; gap: 9px; }
footer > button { background: #242424; }
.credit { position: absolute; right: 3px; bottom: 9px; font: 50px/64px "Noto Sans", "Noto Sans CJK SC", sans-serif; color: #bcbcbc; text-shadow: 1px 1px 2px #222; white-space: nowrap; pointer-events: none; }
```
